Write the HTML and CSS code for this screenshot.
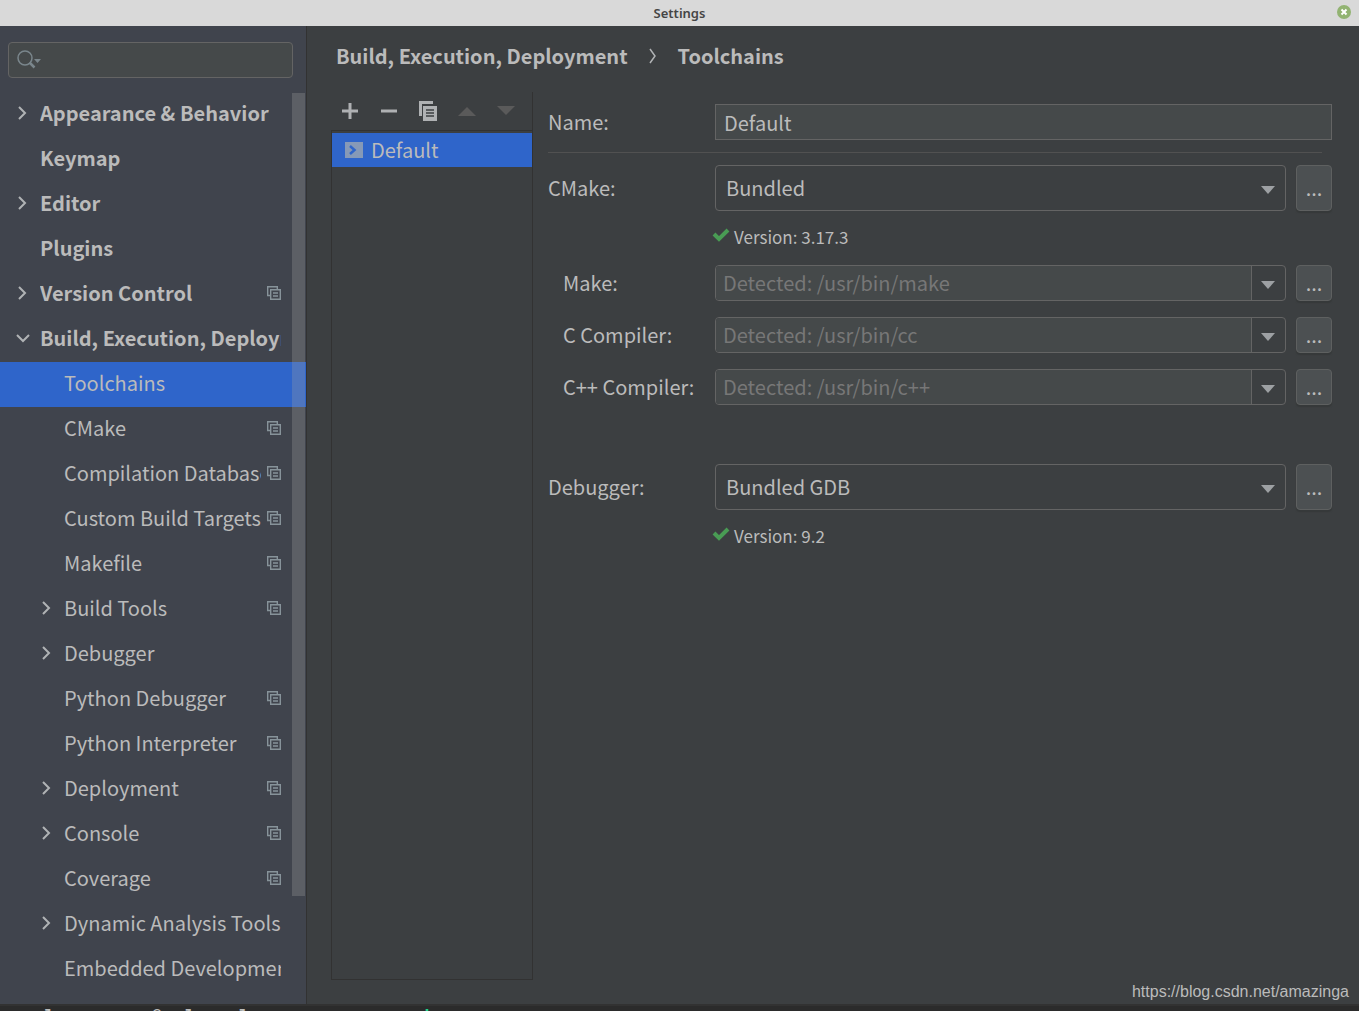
FILE: index.html
```html
<!DOCTYPE html>
<html lang="en">
  <head>
    <meta charset="utf-8" />
    <title>Settings</title>
    <link rel="stylesheet" href="styles.css">
  </head>

  <body>
    <!-- Shared icons -->
    <svg class="hidden">
      <symbol id="right" viewBox="0 0 14 16"><path d="M3 2l6 6-6 6" fill="none" stroke="#b0b3b5" stroke-width="2" /></symbol>
      <symbol id="down" viewBox="0 0 14 16"><path d="M1 5l6 6 6-6" fill="none" stroke="#b0b3b5" stroke-width="2" /></symbol>
      <symbol id="copy" viewBox="0 0 14 14">
        <path d="M3 9.5H.7V.7h9.6V3M3.7 3.7h9.6v9.6H3.7zM6 7h5M6 10h5" fill="none" stroke="#87939a" stroke-width="1.4" />
      </symbol>
      <symbol id="arrow" viewBox="0 0 14 8"><path d="M0 0h14L7 8z" fill="#9da0a3" /></symbol>
      <symbol id="check" viewBox="0 0 18 14"><path d="M2 6l5 5L16 2" fill="none" stroke="#499c54" stroke-width="4" /></symbol>
    </svg>

    <header class="titlebar">
      <h1>Settings</h1>
      <button class="close" aria-label="Close">
        <svg width="14" height="14" viewBox="0 0 14 14"><circle cx="7" cy="7" r="7" fill="#92b372" /><path d="M4.500 4.500l5 5M9.500 4.500l-5 5" stroke="#fff" stroke-width="2" /></svg>
      </button>
    </header>

    <div class="window">
      <aside class="sidebar">
        <div class="search">
          <svg width="26" height="20" viewBox="0 0 26 20"><circle cx="8" cy="8" r="7" fill="none" stroke="#7a868c" stroke-width="1.500" /><path d="M12.500 12.500l5 5" stroke="#7a868c" stroke-width="2.500" /><path d="M17 9h7l-3.500 4z" fill="#7a868c" /></svg>
          <input type="text" aria-label="Search settings" />
        </div>

        <div class="tree-area">
          <nav class="tree">
            <a href="#" class="item top"><svg class="chevron"><use href="#right" /></svg><span>Appearance &amp; Behavior</span></a>
            <a href="#" class="item top"><i class="chevron"></i><span>Keymap</span></a>
            <a href="#" class="item top"><svg class="chevron"><use href="#right" /></svg><span>Editor</span></a>
            <a href="#" class="item top"><i class="chevron"></i><span>Plugins</span></a>
            <a href="#" class="item top"><svg class="chevron"><use href="#right" /></svg><span>Version Control</span><svg class="copy"><use href="#copy" /></svg></a>
            <a href="#" class="item top"><svg class="chevron"><use href="#down" /></svg><span>Build, Execution, Deployment</span></a>
            <a href="#" class="item selected"><i class="chevron"></i><span>Toolchains</span></a>
            <a href="#" class="item"><i class="chevron"></i><span>CMake</span><svg class="copy"><use href="#copy" /></svg></a>
            <a href="#" class="item"><i class="chevron"></i><span>Compilation Database</span><svg class="copy"><use href="#copy" /></svg></a>
            <a href="#" class="item"><i class="chevron"></i><span>Custom Build Targets</span><svg class="copy"><use href="#copy" /></svg></a>
            <a href="#" class="item"><i class="chevron"></i><span>Makefile</span><svg class="copy"><use href="#copy" /></svg></a>
            <a href="#" class="item"><svg class="chevron"><use href="#right" /></svg><span>Build Tools</span><svg class="copy"><use href="#copy" /></svg></a>
            <a href="#" class="item"><svg class="chevron"><use href="#right" /></svg><span>Debugger</span></a>
            <a href="#" class="item"><i class="chevron"></i><span>Python Debugger</span><svg class="copy"><use href="#copy" /></svg></a>
            <a href="#" class="item"><i class="chevron"></i><span>Python Interpreter</span><svg class="copy"><use href="#copy" /></svg></a>
            <a href="#" class="item"><svg class="chevron"><use href="#right" /></svg><span>Deployment</span><svg class="copy"><use href="#copy" /></svg></a>
            <a href="#" class="item"><svg class="chevron"><use href="#right" /></svg><span>Console</span><svg class="copy"><use href="#copy" /></svg></a>
            <a href="#" class="item"><i class="chevron"></i><span>Coverage</span><svg class="copy"><use href="#copy" /></svg></a>
            <a href="#" class="item"><svg class="chevron"><use href="#right" /></svg><span>Dynamic Analysis Tools</span></a>
            <a href="#" class="item"><i class="chevron"></i><span>Embedded Development</span></a>
          </nav>
          <div class="scroll-thumb"></div>
        </div>
      </aside>

      <main class="content">
        <h2 class="breadcrumb">
          <span>Build, Execution, Deployment</span>
          <svg width="10" height="16" viewBox="0 0 10 16"><path d="M2 1l5 7-5 7" fill="none" stroke="#b0b3b5" stroke-width="1.500" /></svg>
          <span>Toolchains</span>
        </h2>

        <div class="panes">
          <section class="toolchains">
            <div class="toolbar">
              <button aria-label="Add"><svg width="20" height="20" viewBox="0 0 20 20"><path d="M2 10h16M10 2v16" stroke="#afb1b3" stroke-width="3" /></svg></button>
              <button aria-label="Remove"><svg width="20" height="20" viewBox="0 0 20 20"><path d="M2 10h16" stroke="#afb1b3" stroke-width="3" /></svg></button>
              <button aria-label="Copy"><svg width="20" height="20" viewBox="0 0 20 20"><path d="M1 0h14v3H4v12H1zM5 5h14v15H5z" fill="#afb1b3" /><path d="M8 9h8M8 12h8M8 15h8" stroke="#3c3f41" stroke-width="1.500" /></svg></button>
              <button aria-label="Move up" disabled><svg width="20" height="20" viewBox="0 0 20 20"><path d="M1 15l9-9 9 9z" fill="#5a5a5a" /></svg></button>
              <button aria-label="Move down" disabled><svg width="20" height="20" viewBox="0 0 20 20"><path d="M1 5h18l-9 9z" fill="#5a5a5a" /></svg></button>
            </div>
            <div class="list">
              <a href="#" class="list-item">
                <svg width="18" height="16" viewBox="0 0 18 16"><path d="M0 0h18v16H0z" fill="#8699b7" /><path d="M5 4l4.500 4L5 12" fill="none" stroke="#2f65ca" stroke-width="2.500" /></svg>
                Default
              </a>
            </div>
          </section>

          <form class="form">
            <div class="row name-row">
              <label for="name">Name:</label>
              <input type="text" id="name" class="name" value="Default" />
            </div>

            <div class="row">
              <label for="cmake">CMake:</label>
              <div class="combo">
                <select id="cmake"><option>Bundled</option></select>
                <svg class="arrow"><use href="#arrow" /></svg>
              </div>
              <button type="button" class="browse" aria-label="Browse CMake">...</button>
            </div>
            <p class="version"><svg width="18" height="14"><use href="#check" /></svg>Version: 3.17.3</p>

            <div class="row small">
              <label for="make">Make:</label>
              <div class="combo">
                <input type="text" id="make" placeholder="Detected: /usr/bin/make" />
                <button type="button" class="drop" aria-label="Show make paths"><svg class="arrow"><use href="#arrow" /></svg></button>
              </div>
              <button type="button" class="browse" aria-label="Browse make">...</button>
            </div>
            <div class="row small">
              <label for="cc">C Compiler:</label>
              <div class="combo">
                <input type="text" id="cc" placeholder="Detected: /usr/bin/cc" />
                <button type="button" class="drop" aria-label="Show C compilers"><svg class="arrow"><use href="#arrow" /></svg></button>
              </div>
              <button type="button" class="browse" aria-label="Browse C compiler">...</button>
            </div>
            <div class="row small">
              <label for="cxx">C++ Compiler:</label>
              <div class="combo">
                <input type="text" id="cxx" placeholder="Detected: /usr/bin/c++" />
                <button type="button" class="drop" aria-label="Show C++ compilers"><svg class="arrow"><use href="#arrow" /></svg></button>
              </div>
              <button type="button" class="browse" aria-label="Browse C++ compiler">...</button>
            </div>

            <div class="row debugger">
              <label for="debugger">Debugger:</label>
              <div class="combo">
                <select id="debugger"><option>Bundled GDB</option></select>
                <svg class="arrow"><use href="#arrow" /></svg>
              </div>
              <button type="button" class="browse" aria-label="Browse debugger">...</button>
            </div>
            <p class="version"><svg width="18" height="14"><use href="#check" /></svg>Version: 9.2</p>
          </form>
        </div>

        <a href="https://blog.csdn.net/amazinga" class="watermark">https://blog.csdn.net/amazinga</a>
      </main>
    </div>

    <!-- Terminal showing under the window -->
    <footer class="terminal">    l         @  l    l                <b>i</b></footer>
  </body>
</html>
```

FILE: styles.css
```css
* {
  box-sizing: border-box;
}

body {
  display: flex;
  flex-direction: column;
  height: 100vh;
  margin: 0;
  overflow: hidden;
  background-color: #3c3f41;
  color: #bbbbbb;
  font-family: "Noto Sans CJK SC", "Noto Sans", sans-serif;
  font-size: 20px;
  line-height: 32px;
}

.hidden {
  display: none;
}

a {
  color: inherit;
  text-decoration: none;
}

button,
input,
select {
  margin: 0;
  padding: 0;
  border: 0;
  outline: 0;
  background: none;
  color: inherit;
  font: inherit;
}

.titlebar {
  position: relative;
  flex: none;
  height: 26px;
  background-color: #d9d9d9;
  color: #454545;
  text-align: center;
}

.titlebar h1 {
  margin: 0;
  font: 600 13px/26px "Noto Sans", sans-serif;
}

.close {
  position: absolute;
  top: 5px;
  right: 8px;
  display: flex;
}

.window {
  display: flex;
  flex: 1;
  min-height: 0;
  border-bottom: 2px solid #323232;
}

/* Sidebar */
.sidebar {
  display: flex;
  flex-direction: column;
  flex: none;
  width: 307px;
  border-right: 1px solid #323232;
  background-color: #40444d;
}

.search {
  display: flex;
  align-items: center;
  height: 36px;
  margin: 16px 13px 14px 8px;
  padding-left: 8px;
  border: 1px solid #646464;
  border-radius: 4px;
  background-color: #45494a;
}

.search input {
  flex: 1;
  min-width: 0;
}

.tree-area {
  position: relative;
  flex: 1;
  min-height: 0;
  overflow: hidden;
}

.item {
  display: flex;
  align-items: center;
  height: 45px;
  padding: 0 25px 4px 40px;
}

.item.top {
  padding-left: 16px;
  font-weight: bold;
}

.item.selected {
  background-color: #2f65ca;
}

.item span {
  flex: 1;
  min-width: 0;
  overflow: hidden;
  white-space: nowrap;
}

.chevron {
  flex: none;
  width: 14px;
  height: 16px;
  margin-right: 10px;
}

.copy {
  flex: none;
  width: 14px;
  height: 14px;
  margin-left: 6px;
}

.scroll-thumb {
  position: absolute;
  top: 1px;
  right: 1px;
  width: 13px;
  height: 88%;
  background-color: rgba(166, 166, 166, 0.28);
}

/* Main part */
.content {
  position: relative;
  display: flex;
  flex-direction: column;
  flex: 1;
  min-width: 0;
  padding: 14px 27px 24px 24px;
}

.breadcrumb {
  display: flex;
  align-items: center;
  gap: 20px;
  margin: 0 0 20px 5px;
  font-size: 20px;
}

.panes {
  display: flex;
  flex: 1;
  gap: 15px;
}

.toolchains {
  display: flex;
  flex-direction: column;
  flex: none;
  width: 202px;
  border-right: 1px solid #323232;
}

.toolbar {
  display: flex;
  align-items: center;
  gap: 19px;
  height: 38px;
  padding-left: 9px;
}

.toolbar button {
  display: flex;
}

.list {
  flex: 1;
  padding-top: 2px;
  border: 1px solid #323232;
  border-right: 0;
}

.list-item {
  display: flex;
  align-items: center;
  gap: 8px;
  height: 34px;
  padding-left: 13px;
  background-color: #2f65ca;
}

.form {
  flex: 1;
  min-width: 0;
  padding-top: 12px;
}

.row {
  display: flex;
  align-items: center;
  height: 46px;
}

.row label {
  flex: none;
  width: 167px;
}

.row.name-row {
  position: relative;
  height: 36px;
  margin-bottom: 25px;
}

.name-row::after {
  content: "";
  position: absolute;
  left: 0;
  right: 10px;
  bottom: -13px;
  height: 1px;
  background-color: #515151;
}

.name {
  flex: 1;
  min-width: 0;
  height: 36px;
  padding-left: 8px;
  border: 1px solid #646464;
  background-color: #45494a;
}

.combo {
  position: relative;
  display: flex;
  flex: 1;
  min-width: 0;
  height: 100%;
  margin-right: 10px;
  border: 1px solid #646464;
  border-radius: 4px;
  overflow: hidden;
}

.combo select {
  width: 100%;
  padding-left: 10px;
  appearance: none;
}

.arrow {
  width: 14px;
  height: 8px;
}

.combo > .arrow {
  position: absolute;
  top: 20px;
  right: 10px;
  pointer-events: none;
}

.combo input {
  flex: 1;
  min-width: 0;
  padding-left: 7px;
  background-color: #45494a;
}

.combo input::placeholder {
  color: #777777;
  opacity: 1;
}

.drop {
  display: flex;
  align-items: center;
  justify-content: center;
  width: 34px;
  padding: 3px 1px 0 0;
  border-left: 1px solid #646464;
}

.browse {
  flex: none;
  width: 36px;
  height: 100%;
  border: 1px solid #5e6060;
  border-radius: 4px;
  background-color: #4c5052;
  box-shadow: 0 2px 1px #36393a;
}

.row.small {
  height: 36px;
  margin-bottom: 16px;
  padding-left: 15px;
}

.small label {
  width: 152px;
}

.row.debugger {
  margin-top: 59px;
}

.version {
  display: flex;
  align-items: center;
  gap: 4px;
  height: 54px;
  margin: 0;
  padding: 0 0 2px 164px;
  font-size: 17px;
}

.version svg {
  margin-bottom: 4px;
}

.watermark {
  position: absolute;
  right: 10px;
  bottom: 2px;
  font: 16px/20px "Liberation Sans", Arial, sans-serif;
}

.terminal {
  flex: none;
  height: 5px;
  padding-top: 1px;
  overflow: hidden;
  background-color: #2b2b2b;
  font: bold 18px/20px "Liberation Mono", monospace;
  white-space: pre;
}

.terminal b {
  color: #23d18b;
}
```
